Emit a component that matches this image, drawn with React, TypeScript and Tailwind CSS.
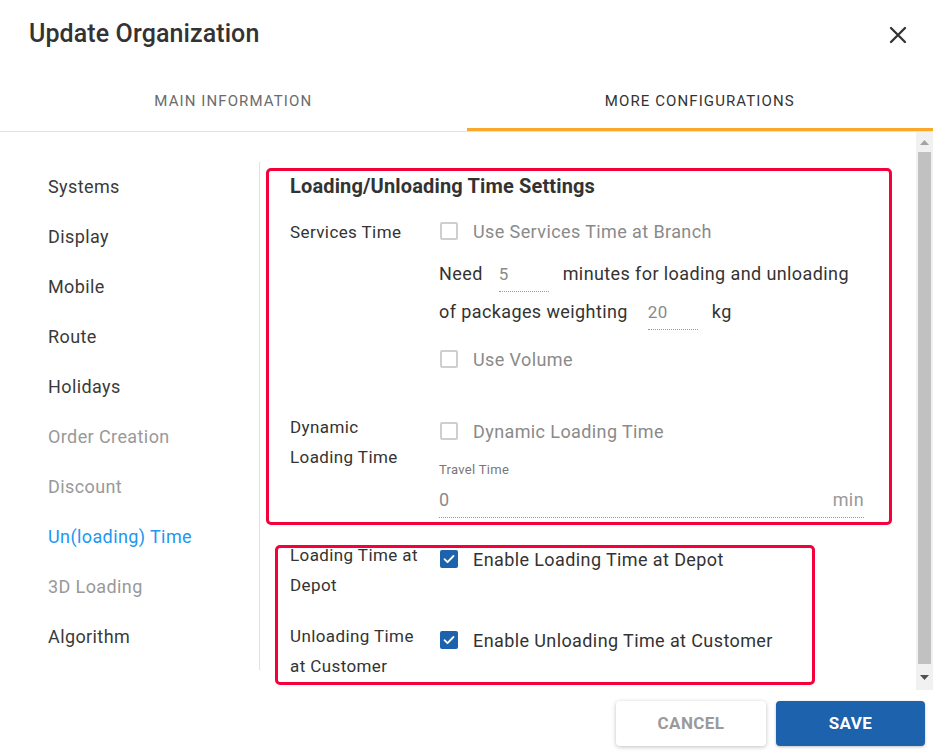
import { ReactNode } from "react";

const navItems = [
  { label: "Systems", state: "normal" },
  { label: "Display", state: "normal" },
  { label: "Mobile", state: "normal" },
  { label: "Route", state: "normal" },
  { label: "Holidays", state: "normal" },
  { label: "Order Creation", state: "disabled" },
  { label: "Discount", state: "disabled" },
  { label: "Un(loading) Time", state: "active" },
  { label: "3D Loading", state: "disabled" },
  { label: "Algorithm", state: "normal" },
];

function Checkbox({ checked, label, dark }: { checked?: boolean; label: string; dark?: boolean }) {
  return (
    <div className="flex items-center h-[30px] pl-px">
      {checked ? (
        <span className="w-[18px] h-[18px] shrink-0 rounded-[2px] bg-[#1c62ac] flex items-center justify-center">
          <svg width="14" height="14" viewBox="0 0 14 14" fill="none">
            <path d="M2.5 7.2l3 3L11.5 4" stroke="white" strokeWidth="1.8" strokeLinecap="round" strokeLinejoin="round" />
          </svg>
        </span>
      ) : (
        <span className="w-[18px] h-[18px] shrink-0 rounded-[2px] border-2 border-[#cfcfcf] bg-white" />
      )}
      <span className={`ml-[15px] text-[18px] tracking-[0.4px] whitespace-nowrap ${dark ? "text-[#333]" : "text-[#8a8a8a]"}`}>
        {label}
      </span>
    </div>
  );
}

function SmallInput({ value, className = "" }: { value: string; className?: string }) {
  return (
    <span className={`inline-flex items-end w-[50px] h-[38px] mr-[14px] border-b border-dotted border-[#9a9a9a] pb-[8px] ${className}`}>
      <span className="text-[17px] tracking-[0.4px] text-[#8a8a8a] leading-none">{value}</span>
    </span>
  );
}

function Row({ label, children, className = "" }: { label: ReactNode; children: ReactNode; className?: string }) {
  return (
    <div className={`grid grid-cols-[149px_1fr] ${className}`}>
      <div className="text-[17px] tracking-[0.4px] leading-[29.5px] text-[#333] whitespace-nowrap">{label}</div>
      <div>{children}</div>
    </div>
  );
}

export default function App() {
  return (
    <div
      className="w-[933px] h-[752px] bg-white flex flex-col overflow-hidden"
      style={{ fontFamily: "Roboto, 'Liberation Sans', sans-serif" }}
    >
      {/* header */}
      <div className="h-[70px] flex items-center justify-between pl-[29px] pr-[26px] pb-[2px]">
        <h1 className="text-[25px] font-medium text-[#333] tracking-[0.1px]">Update Organization</h1>
        <svg width="18" height="18" viewBox="0 0 18 18" className="mt-[2px]">
          <path d="M2 2l14 14M16 2L2 16" stroke="#333" strokeWidth="2.3" strokeLinecap="round" />
        </svg>
      </div>

      {/* tabs */}
      <div className="flex h-[62px] border-b border-[#e2e2e2]">
        <div className="flex-1 flex items-center justify-center text-[15px] tracking-[1.1px] text-[#6b6b6b] pt-[1px]">
          MAIN INFORMATION
        </div>
        <div className="flex-1 flex flex-col">
          <div className="flex-1 flex items-center justify-center text-[15px] tracking-[1.1px] text-[#333] pt-[4px]">
            MORE CONFIGURATIONS
          </div>
          <div className="h-[3px] bg-[#f9a82a]" />
        </div>
      </div>

      {/* body */}
      <div className="flex h-[558px]">
        <div className="flex-1 flex pt-[30px]">
          {/* side nav */}
          <div className="w-[260px] h-[508px] border-r border-[#e2e2e2] flex flex-col">
            {navItems.map((item) => (
              <div
                key={item.label}
                className={`h-[50px] flex items-center pl-[48px] pb-[2px] text-[18px] tracking-[0.4px] ${
                  item.state === "active" ? "text-[#2196f3]" : item.state === "disabled" ? "text-[#999]" : "text-[#3a3a3a]"
                }`}
              >
                {item.label}
              </div>
            ))}
          </div>

          {/* settings */}
          <div className="flex-1 flex flex-col">
            <div className="ml-[6px] mt-[6px] w-[626px] border-[3px] border-[#f5003a] rounded-[5px] pl-[21px] pr-[25px] pt-[3px] pb-[4px]">
              <h2 className="text-[20px] font-bold leading-[24px] tracking-[0.15px] text-[#333]">
                Loading/Unloading Time Settings
              </h2>

              <Row label={<span className="block pt-[2px]">Services Time</span>} className="mt-[18px]">
                <Checkbox label="Use Services Time at Branch" />
                <div className="flex items-center h-[38px] mt-[8px] text-[18px] tracking-[0.4px] text-[#333] whitespace-nowrap">
                  Need
                  <SmallInput value="5" className="ml-[16px]" />
                  minutes for loading and unloading
                </div>
                <div className="flex items-center h-[38px] text-[18px] tracking-[0.4px] text-[#333] whitespace-nowrap">
                  of packages weighting
                  <SmallInput value="20" className="ml-[20px]" />
                  kg
                </div>
                <div className="mt-[14px]">
                  <Checkbox label="Use Volume" />
                </div>
              </Row>

              <Row
                label={
                  <>
                    Dynamic
                    <br />
                    Loading Time
                  </>
                }
                className="mt-[39px]"
              >
                <div className="mt-[3px]">
                  <Checkbox label="Dynamic Loading Time" />
                </div>
                <div className="text-[13px] tracking-[0.3px] leading-[16px] text-[#777] mt-[16px]">Travel Time</div>
                <div className="flex items-center justify-between h-[36px] mt-[4px] border-b border-dotted border-[#9a9a9a] text-[18px] tracking-[0.4px] text-[#8a8a8a]">
                  <span>0</span>
                  <span className="text-[#999]">min</span>
                </div>
              </Row>
            </div>

            <div className="ml-[15px] mt-[20px] w-[540px] h-[140px] border-[3px] border-[#f5003a] rounded-[5px] pl-[12px]">
              <div className="-mt-[7px]">
                <Row
                  label={
                    <>
                      Loading Time at
                      <br />
                      Depot
                    </>
                  }
                >
                  <div className="mt-[3px]">
                    <Checkbox checked dark label="Enable Loading Time at Depot" />
                  </div>
                </Row>
                <Row
                  label={
                    <>
                      Unloading Time
                      <br />
                      at Customer
                    </>
                  }
                  className="mt-[22px]"
                >
                  <div className="mt-[3px]">
                    <Checkbox checked dark label="Enable Unloading Time at Customer" />
                  </div>
                </Row>
              </div>
            </div>
          </div>
        </div>

        {/* scrollbar */}
        <div className="w-[17px] bg-[#f1f1f1] flex flex-col">
          <div className="h-[20px] flex items-center justify-center">
            <svg width="9" height="5" viewBox="0 0 9 5">
              <path d="M0 5L4.5 0L9 5Z" fill="#a3a3a3" />
            </svg>
          </div>
          <div className="flex-1 mx-[2px] bg-[#c1c1c1]" />
          <div className="h-[26px] flex items-center justify-center">
            <svg width="9" height="5" viewBox="0 0 9 5">
              <path d="M0 0L4.5 5L9 0Z" fill="#505050" />
            </svg>
          </div>
        </div>
      </div>

      {/* footer */}
      <div className="flex justify-end gap-[10px] pr-[8px] pt-[11px]">
        <button className="w-[150px] h-[45px] rounded-[4px] bg-white shadow-[0_1px_4px_rgba(0,0,0,0.25)] text-[17px] font-bold tracking-[0.4px] text-[#9a9a9a]">
          CANCEL
        </button>
        <button className="w-[149px] h-[45px] rounded-[4px] bg-[#1c62ac] shadow-[0_1px_3px_rgba(0,0,0,0.25)] text-[17px] font-bold tracking-[0.4px] text-white">
          SAVE
        </button>
      </div>
    </div>
  );
}
